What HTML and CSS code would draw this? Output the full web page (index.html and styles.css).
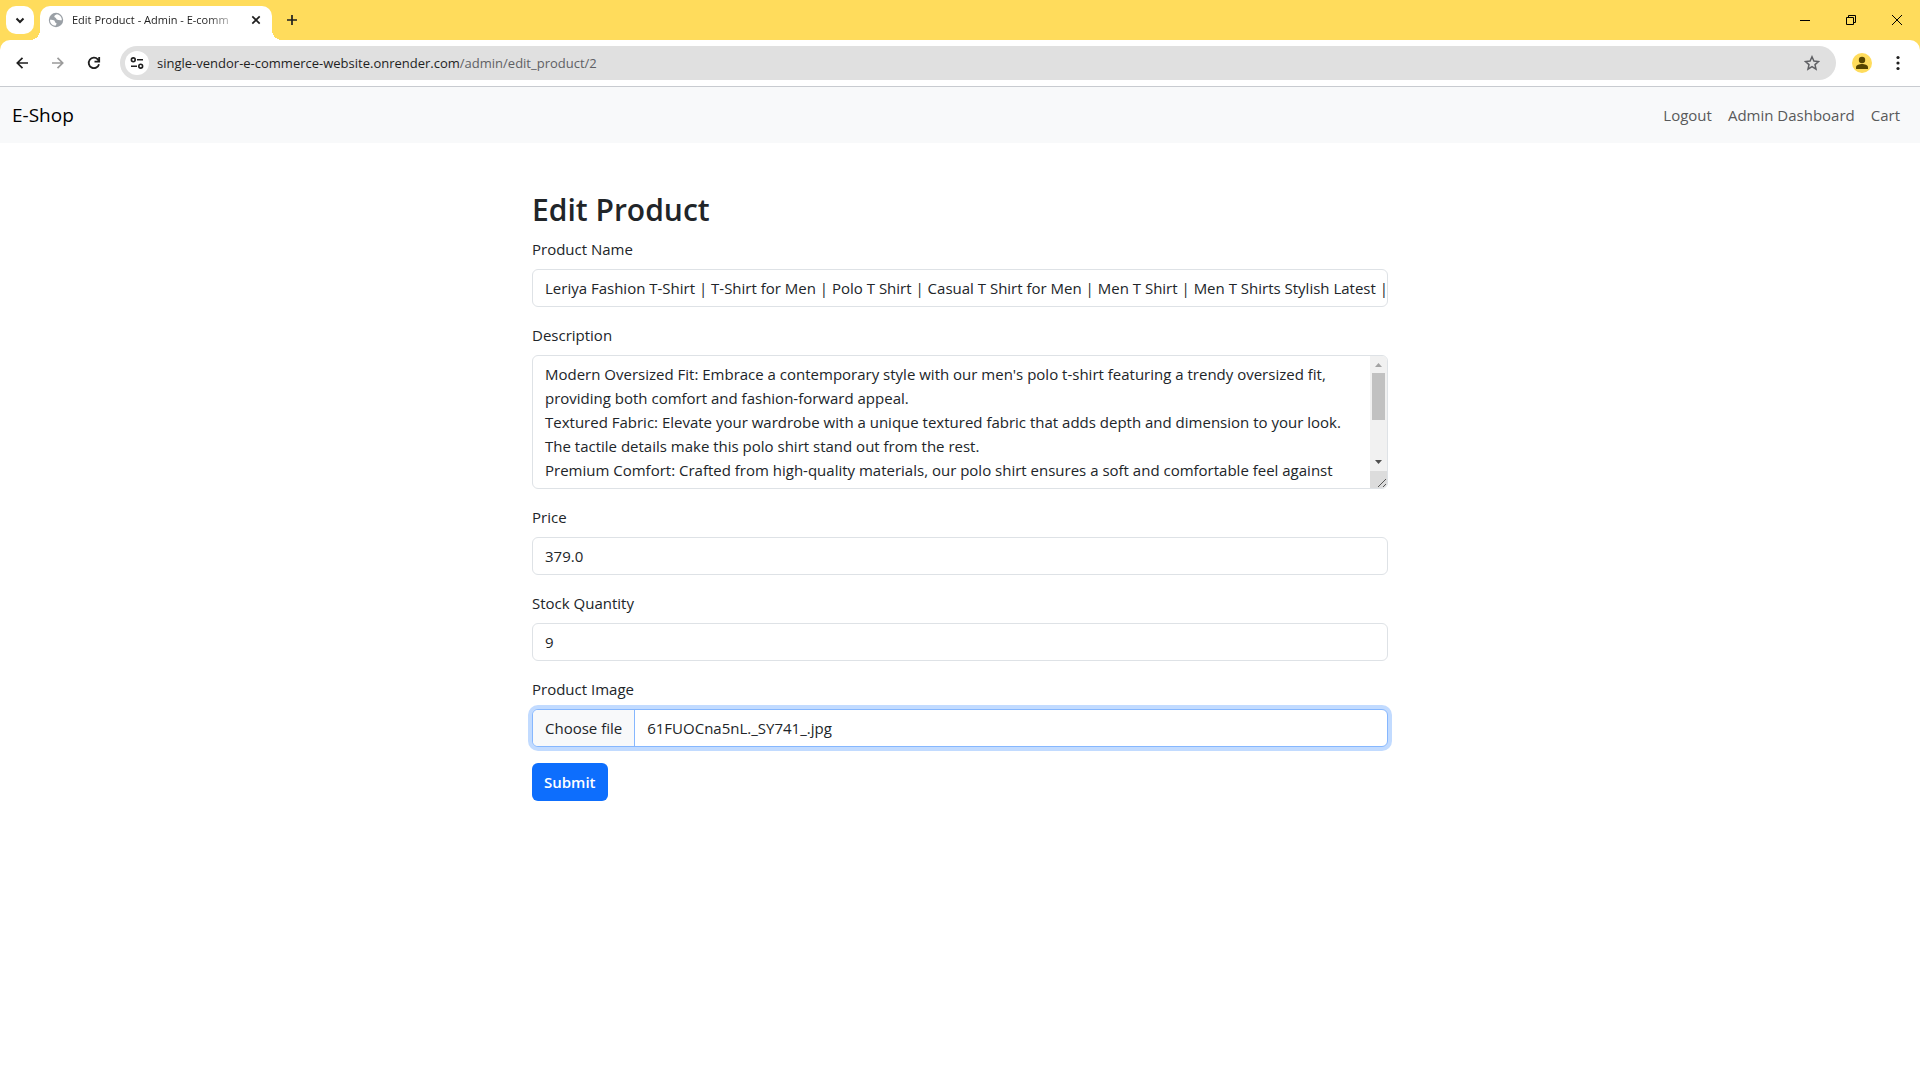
FILE: index.html
```html
<!DOCTYPE html>
<html lang="en">
<head>
<meta charset="utf-8">
<meta name="viewport" content="width=device-width, initial-scale=1">
<title>Edit Product - Admin - E-commerce</title>
<link rel="stylesheet" href="styles.css">
</head>
<body>
<div class="browser">
  <div class="tab-strip">
    <button class="tab-search" aria-label="Search tabs"><svg width="28" height="28" viewBox="0 0 28 28" fill="none" stroke="#1f1f1f" stroke-width="2"><path d="M10.5 12.5l3.5 3.5 3.5-3.5"/></svg></button>
    <div class="tab">
      <svg class="favicon" width="16" height="16" viewBox="0 0 16 16"><circle cx="8" cy="8" r="7.200" fill="#9aa0a6"/><path d="M2 7.800c1.500-.3 3.200 0 4.300.8.9.7.3 1.700 1.300 2.100 1 .3 1.200 1 .6 1.700l-.7 1.400C4.300 13.700 2 11.300 2 7.800zM9 2.200c-1.500.6-2.900 1.300-2.700 2.600.2 1 1.600.7 1.900 1.700.3 1.100 1.300 1.500 2.500 1.400 1.300-.1 1.800.7 3.200.3C13.900 5 12 2.600 9 2.200z" fill="#fff"/></svg>
      <span class="tab-title">Edit Product - Admin - E-comm</span>
      <button class="tab-close" aria-label="Close tab"><svg width="16" height="16" viewBox="0 0 16 16" stroke="#1f1f1f" stroke-width="1.700"><path d="M4.300 4.300l7.400 7.400M11.700 4.300l-7.400 7.400"/></svg></button>
    </div>
    <button class="new-tab" aria-label="New tab"><svg width="16" height="16" viewBox="0 0 16 16" stroke="#1f1f1f" stroke-width="1.700"><path d="M8 3v10M3 8h10"/></svg></button>
    <div class="window-buttons">
      <button aria-label="Minimize"><svg width="12" height="12" viewBox="0 0 12 12" stroke="#000"><path d="M1 6.500h10"/></svg></button>
      <button aria-label="Restore"><svg width="12" height="12" viewBox="0 0 12 12" fill="none" stroke="#000"><path d="M1.500 3.500h7v7h-7zM3.500 3.500v-2h7v7h-2"/></svg></button>
      <button aria-label="Close"><svg width="12" height="12" viewBox="0 0 12 12" stroke="#000"><path d="M1 1l10 10M11 1L1 11"/></svg></button>
    </div>
  </div>
  <div class="toolbar">
    <button class="tool" aria-label="Back"><svg width="16" height="16" viewBox="0 0 16 16" fill="none" stroke="#1f1f1f" stroke-width="1.700"><path d="M14 8H3.500M8.500 2.800L3.300 8l5.200 5.200"/></svg></button>
    <button class="tool" aria-label="Forward"><svg width="16" height="16" viewBox="0 0 16 16" fill="none" stroke="#9b9b9b" stroke-width="1.700"><path d="M2 8h10.500M7.500 2.800L12.700 8l-5.200 5.200"/></svg></button>
    <button class="tool" aria-label="Reload"><svg width="16" height="16" viewBox="0 0 16 16" fill="none" stroke="#1f1f1f" stroke-width="1.800"><path d="M13 9.200A5.200 5.200 0 1 1 11.800 4.400L13 5.800M13.200 2v4.700H8.500"/></svg></button>
    <div class="omnibox">
      <button class="site-info" aria-label="Site information"><svg width="16" height="16" viewBox="0 0 16 16" fill="none" stroke="#1f1f1f" stroke-width="1.600"><circle cx="4.300" cy="4.800" r="1.900"/><path d="M8 4.800h6M2 11.200h6"/><circle cx="11.700" cy="11.200" r="1.900"/></svg></button>
      <div class="url"><span class="host">single-vendor-e-commerce-website.onrender.com</span>/admin/edit_product/2</div>
      <button class="star" aria-label="Bookmark"><svg width="16" height="16" viewBox="0 0 16 16" fill="none" stroke="#5f6064" stroke-width="1.500"><path d="M8 1.800l1.900 4.300 4.600.4L11 9.600l1 4.500-4-2.400-4 2.400 1-4.500L1.500 6.500l4.600-.4z"/></svg></button>
    </div>
    <button class="profile" aria-label="Profile"><svg width="20" height="20" viewBox="0 0 20 20"><circle cx="10" cy="10" r="10" fill="#ffdc5c"/><circle cx="10" cy="7" r="3.200" fill="#574500"/><path d="M4 16v-1.800c0-2 3.500-3.200 6-3.200s6 1.200 6 3.200V16z" fill="#574500"/></svg></button>
    <button class="menu" aria-label="Menu"><svg width="16" height="16" viewBox="0 0 16 16" fill="#1f1f1f"><circle cx="8" cy="2.500" r="1.600"/><circle cx="8" cy="8" r="1.600"/><circle cx="8" cy="13.500" r="1.600"/></svg></button>
  </div>
</div>

<nav class="navbar">
  <a class="brand" href="#">E-Shop</a>
  <div class="nav-links">
    <a href="#">Logout</a>
    <a href="#">Admin Dashboard</a>
    <a href="#">Cart</a>
  </div>
</nav>

<main class="container">
  <h2>Edit Product</h2>
  <form>
    <div class="field">
      <label for="name">Product Name</label>
      <input class="control" id="name" type="text" value="Leriya Fashion T-Shirt | T-Shirt for Men | Polo T Shirt | Casual T Shirt for Men | Men T Shirt | Men T Shirts Stylish Latest |">
    </div>
    <div class="field">
      <label for="description">Description</label>
      <div class="text-area">
        <textarea id="description" rows="5">Modern Oversized Fit: Embrace a contemporary style with our men's polo t-shirt featuring a trendy oversized fit, providing both comfort and fashion-forward appeal.
Textured Fabric: Elevate your wardrobe with a unique textured fabric that adds depth and dimension to your look. The tactile details make this polo shirt stand out from the rest.
Premium Comfort: Crafted from high-quality materials, our polo shirt ensures a soft and comfortable feel against</textarea>
        <div class="scrollbar" aria-hidden="true">
          <svg width="17" height="17" viewBox="0 0 17 17"><path d="M5 11h7L8.500 7z" fill="#a3a3a3"/></svg>
          <div class="track"><div class="thumb"></div></div>
          <svg width="17" height="17" viewBox="0 0 17 17"><path d="M5 6h7l-3.500 4z" fill="#505050"/></svg>
          <svg class="grip" width="17" height="17" viewBox="0 0 17 17" stroke="#555"><path d="M8 16l8-8M13 16l3-3"/></svg>
        </div>
      </div>
    </div>
    <div class="field">
      <label for="price">Price</label>
      <input class="control" id="price" type="text" value="379.0">
    </div>
    <div class="field">
      <label for="stock">Stock Quantity</label>
      <input class="control" id="stock" type="text" value="9">
    </div>
    <div class="field">
      <label for="image">Product Image</label>
      <label class="file" for="image">
        <input class="file-input" id="image" type="file" accept="image/*">
        <span class="file-button">Choose file</span>
        <span class="file-name">61FUOCna5nL._SY741_.jpg</span>
      </label>
    </div>
    <button class="submit" type="submit">Submit</button>
  </form>
</main>
</body>
</html>
```
FILE: styles.css
```css
* {
  box-sizing: border-box;
}

body {
  margin: 0;
  background: #fff;
  color: #212529;
  font: 15px/24px "Open Sans", "Noto Sans", sans-serif;
}

button {
  padding: 0;
  border: 0;
  background: none;
  font: inherit;
}

svg {
  display: block;
  flex: none;
}

/* Browser frame */
.browser {
  background: #ffdc5c;
}

.tab-strip {
  display: flex;
  height: 40px;
  padding: 6px 0 0 6px;
}

.tab-search {
  width: 28px;
  height: 28px;
  border-radius: 10px;
  background: #fff;
}

.tab {
  position: relative;
  display: flex;
  align-items: center;
  width: 232px;
  height: 34px;
  margin-left: 6px;
  padding: 0 8px 6px;
  border-radius: 10px 10px 0 0;
  background: #fff;
}

.tab::before,
.tab::after {
  content: "";
  position: absolute;
  bottom: 0;
  width: 10px;
  height: 10px;
}

.tab::before {
  right: 100%;
  background: radial-gradient(circle at 0 0, transparent 10px, #fff 10px);
}

.tab::after {
  left: 100%;
  background: radial-gradient(circle at 100% 0, transparent 10px, #fff 10px);
}

.tab-title {
  flex: 1;
  margin: 0 8px;
  color: #1f1f1f;
  font-size: 11px;
  white-space: nowrap;
  mask-image: linear-gradient(to left, transparent, #000 32px);
}

.new-tab {
  width: 28px;
  height: 28px;
  margin-left: 6px;
  padding: 6px;
}

.window-buttons {
  display: flex;
  height: 28px;
  margin-left: auto;
}

.window-buttons button {
  width: 46px;
  padding: 0 17px;
}

.toolbar {
  display: flex;
  align-items: center;
  height: 47px;
  padding: 0 14px;
  border-bottom: 1px solid #c8cbd0;
  border-radius: 10px 10px 0 0;
  background: #fff;
}

.tool {
  width: 16px;
  margin-right: 20px;
}

.omnibox {
  display: flex;
  flex: 1;
  align-items: center;
  height: 34px;
  margin-left: -2px;
  padding: 0 16px 0 5px;
  border-radius: 17px;
  background: #e0e0e0;
}

.site-info {
  width: 24px;
  height: 24px;
  padding: 4px;
  border-radius: 50%;
  background: #fff;
}

.url {
  flex: 1;
  margin-left: 8px;
  color: #5f6064;
  font-size: 13px;
}

.host {
  color: #1f1f1f;
}

.profile {
  margin-left: 16px;
}

.menu {
  margin-left: 18px;
}

/* Site header */
.navbar {
  display: flex;
  align-items: center;
  justify-content: space-between;
  min-height: 56px;
  padding: 8px 20px 8px 12px;
  background: #f8f9fa;
}

.brand {
  color: #000;
  font-size: 19px;
  text-decoration: none;
}

.nav-links {
  display: flex;
  gap: 16px;
}

.nav-links a {
  color: #595a5b;
  text-decoration: none;
}

/* Product form */
.container {
  max-width: 880px;
  margin: 48px auto 0;
  padding: 0 12px;
}

h2 {
  margin: 0 0 8px;
  font-size: 30px;
  font-weight: 600;
  line-height: 38px;
}

.field {
  margin-bottom: 16px;
}

.field label {
  display: block;
  margin-bottom: 8px;
}

.control,
.text-area,
.field .file {
  display: flex;
  width: 100%;
  margin: 0;
  border: 1px solid #dee2e6;
  border-radius: 6px;
  background: #fff;
  color: #212529;
  overflow: hidden;
}

.control {
  height: 38px;
  padding: 6px 0 6px 12px;
  font: inherit;
}

textarea {
  flex: 1;
  height: 132px;
  padding: 6px 12px;
  border: 0;
  background: none;
  color: inherit;
  font: inherit;
  overflow: hidden;
  resize: none;
  outline: 0;
}

.scrollbar {
  display: flex;
  flex-direction: column;
  width: 17px;
  background: #f1f1f1;
}

.track {
  flex: 1;
  padding: 0 2px;
}

.thumb {
  height: 47px;
  background: #c1c1c1;
}

.grip {
  background: #dcdcdc;
}

.field .file {
  position: relative;
  border-color: #86b7fe;
  box-shadow: 0 0 0 4px #c2dbff;
}

.file-input {
  position: absolute;
  inset: 0;
  width: 100%;
  opacity: 0;
}

.file-button,
.file-name {
  padding: 6px 12px;
}

.file-button {
  border-right: 1px solid #86b7fe;
  background: #f8f9fa;
}

.submit {
  height: 38px;
  padding: 0 12px;
  border-radius: 6px;
  background: #0d6efd;
  color: #fff;
  font-weight: 600;
}
```
